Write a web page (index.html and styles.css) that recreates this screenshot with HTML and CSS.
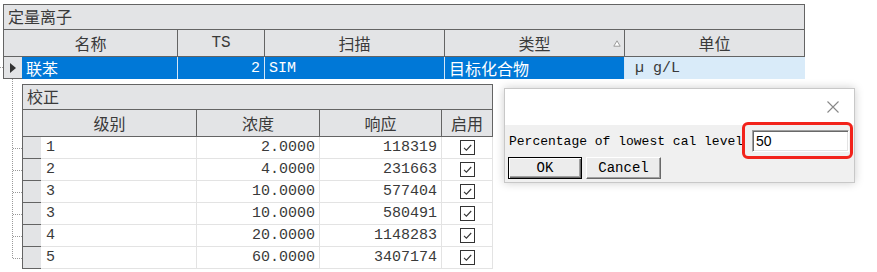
FILE: index.html
```html
<!DOCTYPE html>
<html lang="zh-CN">
<head>
    <meta charset="UTF-8">
    <title>定量离子</title>
    <link rel="stylesheet" href="styles.css">
</head>
<body>
    <div class="page">
        <div class="outer">
            <div class="band">定量离子</div>
            <div class="head">
                <div class="hc o1">名称</div>
                <div class="hc o2 lat">TS</div>
                <div class="hc o3">扫描</div>
                <div class="hc o4">类型
                    <svg class="sort" viewBox="0 0 8 7"><path d="M4 0.8 L7.2 6.2 H0.8 Z" fill="#fff" stroke="#9a9a9a" stroke-width="1"/></svg>
                </div>
                <div class="hc o5">单位</div>
            </div>
            <div class="row sel">
                <div class="ind">
                    <svg class="arrow" viewBox="0 0 6 10"><path d="M0 0 L6 5 L0 10 Z" fill="#333"/></svg>
                </div>
                <div class="cell c1 cn">联苯</div>
                <div class="cell o2 num">2</div>
                <div class="cell o3">SIM</div>
                <div class="cell o4 cn">目标化合物</div>
                <div class="cell o5 unit">µ g/L</div>
            </div>
        </div>

        <div class="child">
            <svg class="tree" width="19" height="190" viewBox="0 0 19 190">
                <g stroke="#9a9a9a" stroke-width="1" stroke-dasharray="1 1" fill="none">
                    <path d="M9.5 0 V180"/>
                    <path d="M10 69.5 H19 M10 91.5 H19 M10 113.5 H19 M10 135.5 H19 M10 157.5 H19 M10 179.5 H19"/>
                </g>
            </svg>
            <div class="inner">
                <div class="band">校正</div>
                <div class="head">
                    <div class="hc i1">级别</div>
                    <div class="hc i2">浓度</div>
                    <div class="hc i3">响应</div>
                    <div class="hc i4">启用</div>
                </div>
                <div class="row"><div class="ind"></div><div class="cell c1">1</div><div class="cell i2 num">2.0000</div><div class="cell i3 num">118319</div><div class="cell i4 chk-cell"><span class="chk"><svg viewBox="0 0 13 13"><path d="M3 6.8 L5.4 9.1 L10.2 4" stroke="#333" stroke-width="1.1" fill="none"/></svg></span></div></div>
                <div class="row"><div class="ind"></div><div class="cell c1">2</div><div class="cell i2 num">4.0000</div><div class="cell i3 num">231663</div><div class="cell i4 chk-cell"><span class="chk"><svg viewBox="0 0 13 13"><path d="M3 6.8 L5.4 9.1 L10.2 4" stroke="#333" stroke-width="1.1" fill="none"/></svg></span></div></div>
                <div class="row"><div class="ind"></div><div class="cell c1">3</div><div class="cell i2 num">10.0000</div><div class="cell i3 num">577404</div><div class="cell i4 chk-cell"><span class="chk"><svg viewBox="0 0 13 13"><path d="M3 6.8 L5.4 9.1 L10.2 4" stroke="#333" stroke-width="1.1" fill="none"/></svg></span></div></div>
                <div class="row"><div class="ind"></div><div class="cell c1">3</div><div class="cell i2 num">10.0000</div><div class="cell i3 num">580491</div><div class="cell i4 chk-cell"><span class="chk"><svg viewBox="0 0 13 13"><path d="M3 6.8 L5.4 9.1 L10.2 4" stroke="#333" stroke-width="1.1" fill="none"/></svg></span></div></div>
                <div class="row"><div class="ind"></div><div class="cell c1">4</div><div class="cell i2 num">20.0000</div><div class="cell i3 num">1148283</div><div class="cell i4 chk-cell"><span class="chk"><svg viewBox="0 0 13 13"><path d="M3 6.8 L5.4 9.1 L10.2 4" stroke="#333" stroke-width="1.1" fill="none"/></svg></span></div></div>
                <div class="row"><div class="ind"></div><div class="cell c1">5</div><div class="cell i2 num">60.0000</div><div class="cell i3 num">3407174</div><div class="cell i4 chk-cell"><span class="chk"><svg viewBox="0 0 13 13"><path d="M3 6.8 L5.4 9.1 L10.2 4" stroke="#333" stroke-width="1.1" fill="none"/></svg></span></div></div>
            </div>
        </div>

        <div class="dialog">
            <div class="dlg-title">
                <svg class="close" viewBox="0 0 12 12"><path d="M0.5 0.5 L11.5 11.5 M11.5 0.5 L0.5 11.5" stroke="#888" stroke-width="1.1"/></svg>
            </div>
            <div class="dlg-body">
                <div class="field">
                    <label class="dlg-label" for="pct">Percentage of lowest cal level</label>
                    <div class="textbox" id="pct">50</div>
                </div>
                <div class="buttons">
                    <button type="button" class="btn def">OK</button>
                    <button type="button" class="btn">Cancel</button>
                </div>
            </div>
            <div class="mark"></div>
        </div>
    </div>
</body>
</html>
```

FILE: styles.css
```css
:root {
    --grid-dark: #646464;
    --grid-light: #e3e3e3;
    --head-bg: #e3e4e6;
    --text: #3a3a3a;
    --select: #0078d7;
    --select-soft: #d9ebf9;
}
* {
    box-sizing: border-box;
}
body {
    margin: 0;
    background: #ffffff;
    color: var(--text);
    font-family: "Liberation Mono", "Noto Sans CJK SC", monospace;
    font-size: 14px;
}
.page {
    position: relative;
    padding: 4px 0 0 3px;
    height: 272px;
    overflow: hidden;
}
.outer {
    width: 802px;
}
.band {
    height: 26px;
    border: 1px solid var(--grid-dark);
    background: var(--head-bg);
    padding-left: 4px;
    font: 16px/23px "Noto Sans CJK SC", sans-serif;
    color: #3a3a3a;
}
.head {
    display: flex;
    height: 27px;
    border-left: 1px solid var(--grid-dark);
    border-bottom: 1px solid var(--grid-dark);
    background: var(--head-bg);
}
.hc {
    position: relative;
    display: flex;
    align-items: center;
    justify-content: center;
    border-right: 1px solid var(--grid-dark);
    font: 16px "Noto Sans CJK SC", sans-serif;
    color: #3a3a3a;
}
.hc.lat {
    font: 16px "Liberation Mono", monospace;
}
.sort {
    position: absolute;
    right: 3px;
    top: 10px;
    width: 8px;
    height: 7px;
}
.o1 { width: 174px; }
.o2 { width: 87px; }
.o3 { width: 180px; }
.o4 { width: 180px; }
.o5 { width: 180px; }
.c1 { width: 156px; }
.i1 { width: 174px; }
.i2 { width: 123px; }
.i3 { width: 122px; }
.i4 { width: 51px; }

.row {
    display: flex;
    height: 22px;
}
.ind {
    position: relative;
    width: 19px;
    height: 22px;
    border-left: 1px solid var(--grid-dark);
    border-bottom: 1px solid var(--grid-dark);
    background: var(--head-bg);
}
.cell {
    height: 22px;
    padding: 0 4px;
    display: flex;
    align-items: center;
    white-space: nowrap;
    border-right: 1px solid var(--grid-light);
    border-bottom: 1px solid var(--grid-light);
    font-size: 15px;
}
.cell.cn {
    font: 16px "Noto Sans CJK SC", sans-serif;
}
.cell.num {
    justify-content: flex-end;
}
.sel .cell {
    background: var(--select);
    color: #ffffff;
    border-right-color: #d4e6f6;
    border-bottom: none;
}
.sel .cell.unit {
    background: var(--select-soft);
    color: var(--text);
    border-right: none;
    padding-left: 10px;
}
.sel .ind::before {
    content: "";
    position: absolute;
    left: -4px;
    top: 10px;
    width: 3px;
    border-top: 1px dotted #9a9a9a;
}
.arrow {
    position: absolute;
    left: 6px;
    top: 6px;
    width: 6px;
    height: 10px;
}

.child {
    display: flex;
    align-items: flex-start;
}
.tree {
    flex: none;
    display: block;
}
.inner {
    width: 471px;
    margin-top: 5px;
}
.inner .cell.c1 {
    padding-left: 5px;
}
.chk-cell {
    justify-content: center;
}
.chk {
    display: block;
    width: 15px;
    height: 15px;
    border: 1px solid #333;
    background: #fff;
}
.chk svg {
    display: block;
    width: 13px;
    height: 13px;
}

.dialog {
    position: absolute;
    left: 504px;
    top: 88px;
    width: 351px;
    height: 95px;
    border: 1px solid #c8c8c8;
    background: #f0f0f0;
    box-shadow: 0 0 9px rgba(0, 0, 0, 0.2);
    display: flex;
    flex-direction: column;
}
.dlg-title {
    height: 36px;
    background: #ffffff;
    display: flex;
    align-items: center;
    justify-content: flex-end;
    padding-right: 15px;
}
.close {
    width: 12px;
    height: 12px;
}
.dlg-body {
    padding: 5px 4px 0 4px;
}
.field {
    display: flex;
    align-items: center;
    height: 22px;
}
.dlg-label {
    width: 243px;
    font-size: 13px;
    color: #000;
    white-space: nowrap;
    overflow: hidden;
}
.textbox {
    width: 97px;
    height: 22px;
    background: #ffffff;
    border: 1px solid;
    border-color: #a0a0a0 #ffffff #ffffff #a0a0a0;
    box-shadow: inset 1px 1px #696969, inset -1px -1px #e3e3e3;
    padding: 2px 3px;
    font: 14px/17px "Liberation Sans", Arial, sans-serif;
    color: #000;
}
.buttons {
    display: flex;
    gap: 4px;
    margin: 5px 0 0 -1px;
}
.btn {
    height: 22px;
    width: 75px;
    padding: 0;
    background: #ececec;
    border: 1px solid;
    border-color: #ffffff #696969 #696969 #ffffff;
    box-shadow: inset -1px -1px #a0a0a0;
    font: 14px "Liberation Mono", monospace;
    color: #000;
}
.btn.def {
    width: 74px;
    border-color: #000;
    box-shadow: inset 1px 1px #ffffff, inset -1px -1px #696969, inset -2px -2px #a0a0a0;
}
.mark {
    position: absolute;
    left: 237px;
    top: 33px;
    width: 111px;
    height: 37px;
    border: 3px solid #f2231b;
    border-radius: 6px;
}
```
